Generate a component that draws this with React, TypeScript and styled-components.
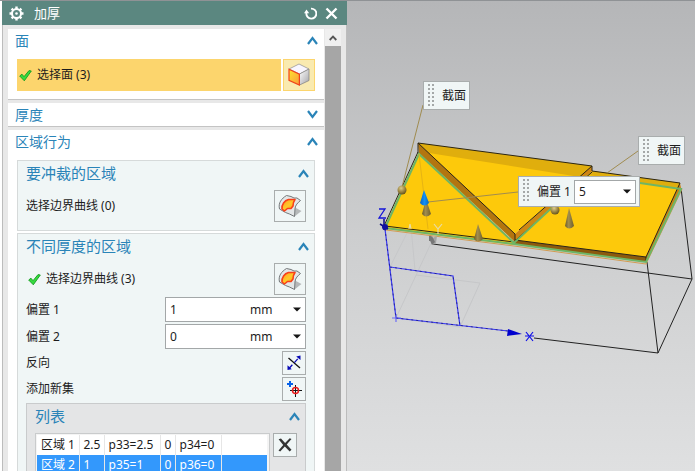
import React, { useId, useState } from "react";
import styled, { createGlobalStyle } from "styled-components";

const GlobalStyle = createGlobalStyle`
  * { box-sizing: border-box; }
  html, body, #root { height: 100%; }
  body {
    margin: 0;
    overflow: hidden;
    background: #fff;
    color: #1c1c1c;
    font: 12px/16px "Noto Sans", "Noto Sans CJK SC", sans-serif;
  }
  button, input, select { font: inherit; color: inherit; margin: 0; }
  button { cursor: pointer; }
`;

const Shell = styled.main`
  display: flex;
  height: 100vh;
  border-top: 1px solid #8f9295;
  overflow: hidden;
`;

const Dialog = styled.section`
  display: flex;
  flex-direction: column;
  flex: 0 0 345px;
  margin-left: 2px;
  min-height: 0;
  background: #e8e8e8;
`;

const TitleBar = styled.header`
  display: flex;
  align-items: center;
  flex: none;
  height: 24px;
  padding: 0 9px 0 7px;
  gap: 8px;
  background: #5b8780;
  color: #fff;
`;

const Title = styled.h1`
  flex: 1;
  margin: 0;
  padding-left: 2px;
  font-size: 13px;
  line-height: 24px;
  font-weight: 400;
`;

const TitleButton = styled.button`
  display: grid;
  place-items: center;
  width: 13px;
  height: 24px;
  padding: 0;
  border: 0;
  background: none;
`;

const DialogBody = styled.div`
  display: flex;
  flex: 1;
  min-height: 0;
  padding: 4px 5px 0;
  border: solid #bcbcbc;
  border-width: 0 1px;
  overflow: hidden;
`;

const Sections = styled.div`
  display: flex;
  flex-direction: column;
  flex: 1;
  gap: 3px;
  min-width: 0;
`;

const ScrollTrack = styled.div`
  display: flex;
  flex-direction: column;
  flex: 0 0 16px;
  margin-left: 1px;
`;

const ScrollUp = styled.button`
  display: grid;
  place-items: center;
  width: 100%;
  height: 17px;
  padding: 0;
  border: 0;
  background: #f0f0f0;
`;

const ScrollThumb = styled.div`
  flex: 1;
  background: #a6a6a6;
`;

const Section = styled.section`
  flex: none;
  background: #fff;
  border-bottom: 1px solid #c4c4c4;
`;

const SectionContent = styled.div`
  display: flex;
  flex-direction: column;
  gap: 2px;
  padding: 7px 9px 8px;
`;

const Group = styled.section<{ $tone?: "list" }>`
  background: ${(p) => (p.$tone === "list" ? "#e4e5e6" : "#f0f6f6")};
  border: 1px solid ${(p) => (p.$tone === "list" ? "#c9cbcc" : "#d6dada")};
`;

const GroupContent = styled.div`
  display: flex;
  flex-direction: column;
  gap: 2px;
  padding: 5px 8px 8px;
`;

const Heading = styled.h2<{ $level: "section" | "group" }>`
  margin: 0;
  font-weight: 400;
  font-size: ${(p) => (p.$level === "section" ? 14 : 15)}px;
`;

const HeadingButton = styled.button<{ $level: "section" | "group" }>`
  display: flex;
  align-items: center;
  justify-content: space-between;
  width: 100%;
  height: ${(p) => (p.$level === "section" ? 23 : 24)}px;
  padding: ${(p) => (p.$level === "section" ? "0 6px 0 7px" : "0 5px 0 8px")};
  border: 0;
  background: none;
  color: #2a84b8;
`;

const Row = styled.div`
  display: flex;
  align-items: center;
  gap: 2px;
`;

const RowLabel = styled.span<{ $highlight?: boolean; $checked?: boolean }>`
  display: flex;
  align-items: center;
  align-self: stretch;
  flex: 1;
  gap: 5px;
  padding-left: ${(p) => (p.$checked ? 2 : 0)}px;
  background: ${(p) => (p.$highlight ? "#fcd56d" : "none")};
`;

const FieldLabel = styled.label`
  flex: 1;
`;

const ToolButton = styled.button<{ $size: number; $active?: boolean }>`
  display: grid;
  place-items: center;
  flex: none;
  width: ${(p) => p.$size}px;
  height: ${(p) => p.$size}px;
  padding: 0;
  border: 1px solid ${(p) => (p.$active ? "#fcd56d" : "#a9adad")};
  background: ${(p) => (p.$active ? "#f9eab0" : "#f0f6f6")};
`;

const Combo = styled.div<{ $width: number; $height: number }>`
  display: flex;
  flex: none;
  width: ${(p) => p.$width}px;
  height: ${(p) => p.$height}px;
  border: 1px solid #a3a7a8;
  background: #fff;
`;

const ValueInput = styled.input`
  flex: 1;
  min-width: 0;
  padding: 0 4px;
  border: 0;
  background: none;
  outline: 0;
`;

const UnitWrap = styled.div`
  display: grid;
  flex: 0 0 55px;
  align-items: center;
  & > * { grid-area: 1 / 1; }
  & > svg { justify-self: end; margin-right: 4px; pointer-events: none; }
`;

const UnitSelect = styled.select`
  appearance: none;
  width: 100%;
  height: 100%;
  padding: 0;
  border: 0;
  background: none;
  outline: 0;
`;

const ArrowButton = styled.button`
  display: grid;
  place-items: center;
  width: 15px;
  padding: 0;
  border: 0;
  background: none;
`;

const ListRow = styled.div`
  display: flex;
  align-items: flex-start;
  gap: 3px;
`;

const TableFrame = styled.div`
  flex: 1;
  padding: 1px 2px 1px 1px;
  border: 1px solid #c9cbcc;
  background: #f4f4f4;
`;

const Table = styled.table`
  width: 100%;
  table-layout: fixed;
  border-collapse: collapse;
  background: #fff;
`;

const TableRow = styled.tr<{ $selected?: boolean }>`
  height: 20px;
  background: ${(p) => (p.$selected ? "#3398fc" : "#fff")};
  color: ${(p) => (p.$selected ? "#fff" : "inherit")};
`;

const Cell = styled.td`
  padding: 0 0 0 4px;
  border-right: 1px solid #e6e6e6;
  white-space: nowrap;
  &:last-child { border-right: 0; }
`;

const Viewport = styled.section`
  position: relative;
  flex: 1;
  min-width: 0;
  overflow: hidden;
  background: linear-gradient(#b5b6b8, #cdcecf 50%, #dfe0e1);
`;

const Scene = styled.svg`
  display: block;
  width: 100%;
  height: 100%;
  overflow: hidden;
`;

const Callout = styled.div<{ $x: number; $y: number; $height: number }>`
  position: absolute;
  left: ${(p) => p.$x}px;
  top: ${(p) => p.$y}px;
  display: flex;
  align-items: center;
  height: ${(p) => p.$height}px;
  padding: 0 3px 0 4px;
  gap: 3px;
  border: 1px solid #a9adad;
  background: #f0f6f6;
  white-space: nowrap;
`;

const Grip = styled.span<{ $rows: number }>`
  align-self: flex-start;
  flex: none;
  width: 8px;
  height: ${(p) => p.$rows * 4}px;
  margin: 2px 5px 0 -2px;
  background: conic-gradient(from 90deg at 2px 2px, transparent 75%, #a4a8a8 0) 0 0 / 4px 4px;
`;

function Chevron({ open }: { open: boolean }) {
  return (
    <svg width="11" height="9" viewBox="0 0 11 9" aria-hidden="true">
      <path
        d={open ? "M1 8 5.5 2 10 8" : "M1 1 5.5 7 10 1"}
        fill="none"
        stroke="#2a84b8"
        strokeWidth="2.2"
      />
    </svg>
  );
}

function DownArrow() {
  return (
    <svg width="8" height="5" viewBox="0 0 8 5" aria-hidden="true">
      <path d="M0 .5h8L4 4.5z" fill="#151515" />
    </svg>
  );
}

function CheckIcon() {
  return (
    <svg width="13" height="13" viewBox="0 0 13 13" aria-hidden="true">
      <path d="M.7 7 3 5.2 5 7.7 10 1.6 12.3 2 5.3 11.8z" fill="#35dc3e" stroke="#159b20" strokeWidth=".9" />
    </svg>
  );
}

function GearIcon() {
  return (
    <svg width="15" height="15" viewBox="0 0 15 15" aria-hidden="true">
      <circle cx="7.5" cy="7.5" r="4.5" fill="none" stroke="#fff" strokeWidth="2" />
      <circle cx="7.5" cy="7.5" r="1.3" fill="#fff" />
      <g stroke="#fff" strokeWidth="2.4">
        <path d="M7.5.5v2.5M7.5 12v2.5M.5 7.5H3M12 7.5h2.5M2.6 2.6 4 4M11 11l1.4 1.4M2.6 12.4 4 11M11 4l1.4-1.4" />
      </g>
    </svg>
  );
}

function ResetIcon() {
  return (
    <svg width="13" height="13" viewBox="0 0 13 13" aria-hidden="true">
      <path d="M7 1.6A5 5 0 1 1 2.4 6" fill="none" stroke="#fff" strokeWidth="1.9" />
      <path d="M0 6.2 2.5 2.6 5.2 6.2z" fill="#fff" />
    </svg>
  );
}

function CloseIcon() {
  return (
    <svg width="13" height="13" viewBox="0 0 13 13" aria-hidden="true">
      <path d="m1.5 1.5 10 10m0-10-10 10" stroke="#fff" strokeWidth="2.4" />
    </svg>
  );
}

function CubeIcon() {
  return (
    <svg width="24" height="24" viewBox="0 0 24 24" aria-hidden="true">
      <defs>
        <linearGradient id="cubeFace" x1="0" y1="0" x2="1" y2="1">
          <stop offset="0" stopColor="#ffe42e" />
          <stop offset="1" stopColor="#f99a3c" />
        </linearGradient>
        <linearGradient id="cubeSide" x1="0" y1="0" x2="1" y2="1">
          <stop offset="0" stopColor="#fff" />
          <stop offset="1" stopColor="#a4a4a8" />
        </linearGradient>
      </defs>
      <path d="M12 1 22 6 12.5 11 2 6z" fill="#f8f6ff" stroke="#999" strokeWidth=".8" />
      <path d="M12.5 11 22 6v11.5L12.5 22z" fill="url(#cubeSide)" stroke="#888" strokeWidth=".8" />
      <path d="m2 6.2 10.4 5V22L2 17.3z" fill="url(#cubeFace)" stroke="#f0421d" strokeWidth="1.2" />
    </svg>
  );
}

function CurveIcon() {
  return (
    <svg width="26" height="26" viewBox="0 0 26 26" aria-hidden="true">
      <defs>
        <linearGradient id="curvePatch" x1="0" y1="0" x2="1" y2="1">
          <stop offset="0" stopColor="#ff9b20" />
          <stop offset=".5" stopColor="#ffc928" />
          <stop offset="1" stopColor="#ff8d18" />
        </linearGradient>
      </defs>
      <path d="m18 14.5 6.5 3.5-7 5.5z" fill="#b5b8b9" />
      <path
        d="M9.5 2.5 14 3.5l3 1.5h3l3.5 2.5c-3 2.5-5 4.500-5.500 8L17.500 23.500 12.500 21 8.500 19.500 2.500 16C1 10 4.500 5.500 9.500 2.500z"
        fill="#e3e6e7"
        stroke="#74787a"
        strokeWidth="1"
      />
      <path
        d="M5 16C4.500 11.500 7.500 7.500 11.500 6.500h6.500c-1.500 2-2 4-2 6.500L14 15.500h-3.500L7.500 18z"
        fill="url(#curvePatch)"
        stroke="#f8401a"
        strokeWidth="1.6"
        strokeLinejoin="round"
      />
    </svg>
  );
}

function ReverseIcon() {
  return (
    <svg width="16" height="16" viewBox="0 0 16 16" aria-hidden="true">
      <path d="m2.500 3 11.500 10" stroke="#111" strokeWidth="1.3" />
      <path d="M3 13.500 13 2.500" stroke="#0708b4" strokeWidth="1.300" strokeDasharray="5 3 5" />
      <path d="M14.500.5v4.500L10.200 1.400zM1.500 15v-4.800l4.300 4z" fill="#0708b4" />
    </svg>
  );
}

function AddSetIcon() {
  return (
    <svg width="16" height="16" viewBox="0 0 16 16" aria-hidden="true">
      <path d="M4 0v6M1 3h6" stroke="#0761e8" strokeWidth="2" />
      <path d="M9.500 4v12M4 9.500h12" stroke="#111" strokeWidth="1" />
      <circle cx="9.500" cy="9.500" r="3" fill="none" stroke="#ee1b1b" strokeWidth="1.500" />
    </svg>
  );
}

function DeleteIcon() {
  return (
    <svg width="16" height="16" viewBox="0 0 16 16" aria-hidden="true">
      <path d="M1.6 2.200 4 1.400l4.100 4.500 4.600-4.600 1.800.8-4.800 5.500 4.800 5.100-1.800 1.900-4.900-5-4.600 4.900-1.700-1 4.700-5.600z" fill="#343434" />
    </svg>
  );
}

type PanelProps = {
  title: string;
  defaultOpen?: boolean;
  children?: React.ReactNode;
};

function PanelSection({ title, defaultOpen = true, children }: PanelProps) {
  const [open, setOpen] = useState(defaultOpen);
  return (
    <Section>
      <Heading $level="section">
        <HeadingButton $level="section" aria-expanded={open} onClick={() => setOpen(!open)}>
          {title}
          <Chevron open={open} />
        </HeadingButton>
      </Heading>
      {open && children && <SectionContent>{children}</SectionContent>}
    </Section>
  );
}

function PanelGroup({ title, tone, children }: PanelProps & { tone?: "list" }) {
  const [open, setOpen] = useState(true);
  return (
    <Group $tone={tone}>
      <Heading as="h3" $level="group">
        <HeadingButton $level="group" aria-expanded={open} onClick={() => setOpen(!open)}>
          {title}
          <Chevron open={open} />
        </HeadingButton>
      </Heading>
      {open && <GroupContent>{children}</GroupContent>}
    </Group>
  );
}

function OffsetField({ label, value }: { label: string; value: string }) {
  const id = useId();
  return (
    <Row>
      <FieldLabel htmlFor={id}>{label}</FieldLabel>
      <Combo $width={141} $height={25}>
        <ValueInput id={id} defaultValue={value} />
        <UnitWrap>
          <UnitSelect aria-label={`${label} mm`}>
            <option>mm</option>
          </UnitSelect>
          <DownArrow />
        </UnitWrap>
      </Combo>
    </Row>
  );
}

const regions = [
  ["区域 1", "2.5", "p33=2.5", "0", "p34=0", ""],
  ["区域 2", "1", "p35=1", "0", "p36=0", ""],
];

const columnWidths = [42, 25, 56, 15, 46];

function RegionTable() {
  return (
    <TableFrame>
      <Table aria-label="列表">
        <colgroup>
          {columnWidths.map((w, i) => (
            <col key={i} width={w} />
          ))}
          <col />
        </colgroup>
        <tbody>
          {regions.map((cells, r) => (
            <TableRow key={r} $selected={r === 1}>
              {cells.map((c, i) => (
                <Cell key={i}>{c}</Cell>
              ))}
            </TableRow>
          ))}
        </tbody>
      </Table>
    </TableFrame>
  );
}

function Cone({ x, y, h = 20, blue }: { x: number; y: number; h?: number; blue?: boolean }) {
  return (
    <path
      d={`M${x} ${y}L${x - 4} ${y + h - 3}Q${x} ${y + h + 2} ${x + 5} ${y + h - 3}Z`}
      fill={blue ? "url(#blueCone)" : "url(#tanCone)"}
    />
  );
}

function ModelScene() {
  return (
    <Scene role="img" aria-label="加厚">
      <defs>
        <linearGradient id="tanCone">
          <stop offset="0" stopColor="#6d5d27" />
          <stop offset=".4" stopColor="#a18d4e" />
          <stop offset="1" stopColor="#6f602c" />
        </linearGradient>
        <linearGradient id="blueCone">
          <stop offset="0" stopColor="#0762c4" />
          <stop offset=".5" stopColor="#1290f4" />
          <stop offset="1" stopColor="#0668c4" />
        </linearGradient>
        <radialGradient id="ball" cx=".4" cy=".3" r=".7">
          <stop offset="0" stopColor="#dccb8c" />
          <stop offset=".6" stopColor="#9a8440" />
          <stop offset="1" stopColor="#65551f" />
        </radialGradient>
      </defs>
      <g transform="translate(-347 -1)" fill="none">
        <g stroke="#c6c7c9">
          <path d="M396 318 433 239M396 318 460 327 480 283 416 275M410 227 390 267M411 227 415 270" />
        </g>
        <g stroke="#222" strokeWidth="1">
          <path d="M430 235v6M433 244 692 279 658 353 534 338M681 188 692 279M647 262 658 353" />
        </g>

        <path d="M385 226 419 152 514 242 513 245 386 229z" fill="#fdc90b" />
        <path d="M592 171 680 183 646 257 515 240z" fill="#fdc90b" />
        <path d="M592 171 680 183 678 188 588 175z" fill="#e0ae0d" />
        <path d="M515 240 646 257v5L515 244z" fill="#8c5a0d" />
        <path d="M680 183 646 257v5L681 188z" fill="#c78315" />
        <path d="M418 143 592 166 515 234z" fill="#fdc90b" />
        <path d="M418 143 592 166 580 177 429 153z" fill="#e0ae0d" />
        <path d="M418 143 515 234v8L419 153z" fill="#b3750f" />
        <path d="M592 166 515 234v7L592 171z" fill="#cf8613" />

        <path d="M386 230 514 246 646 264 682 189" stroke="#d39b50" />
        <g stroke="#2b2514" strokeWidth="1">
          <path d="M418 143 592 166M592 171 680 183 646 257 515 240M646 257v5" />
          <path d="M592 166v5M418 143v10M418 143 515 234v8M519 230 592 166M516 240 592 172M384 226 418 152M385 226 514 242" />
        </g>
        <g stroke="#6eb565" strokeWidth="2">
          <path d="M385 228 419 154 514 243 586 176M385 228 514 244 646 262 681 189 640 183" />
        </g>
        <path d="M419 154 428 229" stroke="#e7b413" />

        <g stroke="#a08c50">
          <path d="M423 105 402 187M638 151 607 173" />
          <path d="M428 202 518 192" />
        </g>
        <circle cx="402" cy="190" r="4.5" fill="url(#ball)" />
        <circle cx="555" cy="210" r="4.5" fill="url(#ball)" />
        <Cone x={426} y={199} h={18} />
        <Cone x={424} y={190} h={16} blue />
        <Cone x={478} y={224} h={18} />
        <Cone x={569} y={208} h={21} />
        <path d="m430 239 7-3-1 7-4 2z" fill="#a4a5a5" />
        <path d="m429 238 3-2 3 6-3 3z" fill="#777" />
        <path d="m434 224 4 5m4-5-4 5v5M409 229l1-5 1 5" stroke="#e8dba8" strokeWidth="1.2" />

        <g stroke="#3736f5" strokeWidth="1.2">
          <path d="M385 229 396 318 508 331M390 267 453 276 460 326" />
          <path d="M392 318h9M396 314v8" stroke="#6d6df5" />
        </g>
        <path d="M390 267 453 276 460 326M385 229 396 318 508 331" stroke="#191974" strokeWidth=".7" strokeDasharray="2 3" />
        <path d="M384 219v11M380 224l8 5" stroke="#08088a" strokeWidth="1.5" />
        <circle cx="385" cy="227" r="3" fill="#1010a0" />
        <path d="M379 209h6l-6 9h7" stroke="#1414d8" strokeWidth="1.3" />
        <path d="m508 329 14 5-15 2z" fill="#0000ce" />
        <path d="m526 332 7 9m0-9-7 9m-1-5h9" stroke="#1111e8" strokeWidth="1.2" />
      </g>
    </Scene>
  );
}

export default function App() {
  return (
    <>
      <GlobalStyle />
      <Shell>
        <Dialog aria-label="加厚">
          <TitleBar>
            <GearIcon />
            <Title>加厚</Title>
            <TitleButton aria-label="重置">
              <ResetIcon />
            </TitleButton>
            <TitleButton aria-label="关闭">
              <CloseIcon />
            </TitleButton>
          </TitleBar>
          <DialogBody>
            <Sections>
              <PanelSection title="面">
                <Row>
                  <RowLabel $highlight $checked>
                    <CheckIcon />
                    选择面 (3)
                  </RowLabel>
                  <ToolButton $size={32} $active aria-label="选择面">
                    <CubeIcon />
                  </ToolButton>
                </Row>
              </PanelSection>
              <PanelSection title="厚度" defaultOpen={false} />
              <PanelSection title="区域行为">
                <PanelGroup title="要冲裁的区域">
                  <Row>
                    <RowLabel>选择边界曲线 (0)</RowLabel>
                    <ToolButton $size={32} aria-label="选择边界曲线">
                      <CurveIcon />
                    </ToolButton>
                  </Row>
                </PanelGroup>
                <PanelGroup title="不同厚度的区域">
                  <Row>
                    <RowLabel $checked>
                      <CheckIcon />
                      选择边界曲线 (3)
                    </RowLabel>
                    <ToolButton $size={32} aria-label="选择边界曲线">
                      <CurveIcon />
                    </ToolButton>
                  </Row>
                  <OffsetField label="偏置 1" value="1" />
                  <OffsetField label="偏置 2" value="0" />
                  <Row>
                    <RowLabel>反向</RowLabel>
                    <ToolButton $size={24} aria-label="反向">
                      <ReverseIcon />
                    </ToolButton>
                  </Row>
                  <Row>
                    <RowLabel>添加新集</RowLabel>
                    <ToolButton $size={24} aria-label="添加新集">
                      <AddSetIcon />
                    </ToolButton>
                  </Row>
                  <PanelGroup title="列表" tone="list">
                    <ListRow>
                      <RegionTable />
                      <ToolButton $size={24} aria-label="移除">
                        <DeleteIcon />
                      </ToolButton>
                    </ListRow>
                  </PanelGroup>
                </PanelGroup>
              </PanelSection>
            </Sections>
            <ScrollTrack>
              <ScrollUp aria-label="向上滚动">
                <svg width="8" height="6" viewBox="0 0 8 6" aria-hidden="true">
                  <path d="M.7 5 4 1.6 7.3 5" fill="none" stroke="#555" strokeWidth="1.8" />
                </svg>
              </ScrollUp>
              <ScrollThumb />
            </ScrollTrack>
          </DialogBody>
        </Dialog>
        <Viewport>
          <ModelScene />
          <Callout $x={76} $y={80} $height={29}>
            <Grip $rows={6} />
            截面
          </Callout>
          <Callout $x={291} $y={135} $height={29}>
            <Grip $rows={6} />
            截面
          </Callout>
          <Callout $x={171} $y={175} $height={31}>
            <Grip $rows={6} />
            <label htmlFor="handle-offset">偏置 1</label>
            <Combo $width={62} $height={24}>
              <ValueInput id="handle-offset" defaultValue="5" />
              <ArrowButton aria-label="偏置 1 选项">
                <DownArrow />
              </ArrowButton>
            </Combo>
          </Callout>
        </Viewport>
      </Shell>
    </>
  );
}
